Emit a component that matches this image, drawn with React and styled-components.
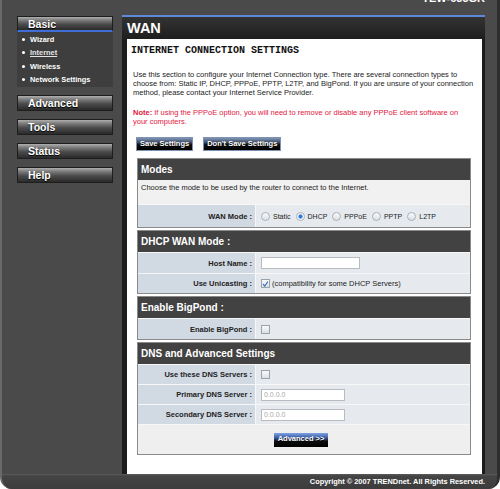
import React from 'react'
import styled, { createGlobalStyle } from 'styled-components'

const GlobalStyle = createGlobalStyle`
  html, body { margin: 0; padding: 0; background: #fff; }
  body { font-family: "Liberation Sans", Arial, sans-serif; overflow: hidden; }
  * { box-sizing: border-box; }
`

const Frame = styled.div`
  width: 500px;
  background: #4a4a4a;
  border-left: 2px solid #6a6a6a;
  border-right: 3px solid #2e2e2e;
  border-radius: 0 0 12px 12px;
  overflow: hidden;
`

const TopBar = styled.div`
  height: 15px;
  display: flex;
  justify-content: flex-end;
  padding-right: 12px;
  overflow: hidden;
`

const Model = styled.div`
  margin-top: -8px;
  color: #fff;
  font-weight: bold;
  font-size: 11px;
  line-height: 12px;
`

const Body = styled.div`
  display: flex;
  height: 459px;
`

const Sidebar = styled.div`
  width: 120px;
  padding: 1px 0 0 15px;
  display: flex;
  flex-direction: column;
  gap: 8px;
`

const MenuGroup = styled.div`
  display: flex;
  flex-direction: column;
`

const MenuButton = styled.div`
  width: 96px;
  height: 16px;
  border: 1px solid #1e1e1e;
  border-bottom: ${({ $active }) => ($active ? '2px solid #3f6fd6' : '1px solid #1e1e1e')};
  background: linear-gradient(to bottom, #b0b0b0 0%, #808080 22%, #4c4c4c 55%, #2a2a2a 100%);
  color: #fff;
  font-weight: bold;
  font-size: 10.5px;
  line-height: 14px;
  padding-left: 10px;
  text-shadow: 0 1px 1px #000;
`

const SubMenu = styled.div`
  width: 96px;
  height: 55px;
  background: #3e3e3e;
  padding-top: 1px;
`

const SubItem = styled.div`
  display: flex;
  align-items: center;
  height: 13.3px;
  padding-left: 5px;
  gap: 5px;
  color: ${({ $current }) => ($current ? '#e4e4e4' : '#fff')};
  font-weight: bold;
  font-size: 7.4px;
  text-decoration: ${({ $current }) => ($current ? 'underline' : 'none')};
`

const Bullet = styled.span`
  width: 3px;
  height: 3px;
  border-radius: 50%;
  background: #fff;
`

const Main = styled.div`
  width: 363px;
  display: flex;
  flex-direction: column;
  background: #1c1c1c;
`

const MainHeader = styled.div`
  height: 24px;
  border-top: 2px solid #5f88d8;
  background: linear-gradient(to bottom, #333 0%, #1e1e1e 100%);
  color: #fff;
  font-weight: bold;
  font-size: 14.5px;
  line-height: 22px;
  padding-left: 5px;
`

const ContentWrap = styled.div`
  flex: 1;
  display: flex;
  padding: 0 3px 0 5px;
`

const Content = styled.div`
  flex: 1;
  background: #fff;
  padding: 7px 4px 0 4px;
`

const Title = styled.div`
  font-family: "Liberation Mono", "Courier New", monospace;
  font-weight: bold;
  font-size: 10px;
  line-height: 10px;
  color: #111;
`

const Para = styled.p`
  margin: ${({ $top }) => $top}px 0 0 2px;
  font-size: 7.5px;
  line-height: 9.2px;
  color: ${({ $note }) => ($note ? '#e4163c' : '#222')};
  white-space: nowrap;
`

const ButtonRow = styled.div`
  display: flex;
  gap: 10px;
  margin: 11px 0 0 5px;
`

const Button = styled.div`
  height: 14px;
  padding: 0 3px;
  border: 1px solid #7d93b4;
  background: linear-gradient(to bottom, #7f95b6 0%, #44526a 35%, #111 55%, #000 100%);
  color: #fff;
  font-weight: bold;
  font-size: 7.5px;
  line-height: 12px;
  text-shadow: 0 1px 0 #000;
`

const Sections = styled.div`
  width: 334px;
  margin: 7px 0 0 6px;
  display: flex;
  flex-direction: column;
  gap: 2px;
`

const Section = styled.div`
  border: 1px solid #8a8a8a;
`

const SectionHead = styled.div`
  height: 21px;
  background: #424242;
  color: #fff;
  font-weight: bold;
  font-size: 10px;
  line-height: 21px;
  padding-left: 3px;
`

const DescRow = styled.div`
  height: 24px;
  background: #f1f1f1;
  font-size: 7.5px;
  padding: 3px 0 0 3px;
  color: #222;
`

const Row = styled.div`
  display: flex;
  height: ${({ $h }) => $h || 20}px;
  border-top: 1px solid #f7f7f7;
`

const Label = styled.div`
  width: 118px;
  background: #d1d9e3;
  border-right: 1px solid #f7f7f7;
  display: flex;
  align-items: center;
  justify-content: flex-end;
  padding-right: 3px;
  font-weight: bold;
  font-size: 7.5px;
  color: #222;
`

const Value = styled.div`
  flex: 1;
  background: #e6eaef;
  display: flex;
  align-items: center;
  padding-left: 5px;
  font-size: 7.5px;
  color: #222;
`

const Radio = styled.span`
  width: 9px;
  height: 9px;
  border-radius: 50%;
  border: 1px solid #a9b0b8;
  background: ${({ $on }) =>
    $on ? 'radial-gradient(circle, #2d7be0 0 1.8px, #f4f6f8 2.4px)' : 'linear-gradient(#f8f9fa, #dde1e5)'};
  margin-right: 3px;
`

const RadioText = styled.span`
  font-size: 7px;
  margin-right: 5px;
`

const Check = styled.span`
  width: 9px;
  height: 9px;
  border: 1px solid #9aa2aa;
  background: linear-gradient(#fafafa, #dcdfe3);
  display: flex;
  align-items: center;
  justify-content: center;
  margin-right: ${({ $gap }) => $gap || 0}px;
`

const TextBox = styled.div`
  width: ${({ $w }) => $w}px;
  height: ${({ $h }) => $h}px;
  background: #fff;
  border: 1px solid #b8bcc2;
  color: #a8a8a8;
  font-size: 7px;
  line-height: ${({ $h }) => $h - 2}px;
  padding-left: 2px;
`

const ActionRow = styled.div`
  height: 30px;
  border-top: 1px solid #f7f7f7;
  background: #efefef;
  display: flex;
  align-items: center;
  justify-content: center;
  padding-right: 6px;
`

const AdvButton = styled(Button)`
  border: none;
  padding: 0 4px;
  background: linear-gradient(to bottom, #7fa3e6 0%, #3a5a9e 35%, #0c0c0c 60%, #000 100%);
`

const Footer = styled.div`
  height: 15px;
  background: linear-gradient(to bottom, #5c5c5c 0, #444 2px, #3c3c3c 100%);
  color: #fff;
  font-weight: bold;
  font-size: 7.4px;
  line-height: 15px;
  text-align: right;
  padding-right: 12px;
`

const CheckMark = () => (
  <svg width="8" height="8" viewBox="0 0 8 8">
    <path d="M1.2 4.2 L3.2 6.4 L6.8 1.2" fill="none" stroke="#2f64c8" strokeWidth="1.2" />
  </svg>
)

const menu = ['Advanced', 'Tools', 'Status', 'Help']
const subItems = ['Wizard', 'Internet', 'Wireless', 'Network Settings']
const modes = ['Static', 'DHCP', 'PPPoE', 'PPTP', 'L2TP']

export default function App() {
  return (
    <>
      <GlobalStyle />
      <Frame>
        <TopBar>
          <Model>TEW-633GR</Model>
        </TopBar>
        <Body>
          <Sidebar>
            <MenuGroup>
              <MenuButton $active>Basic</MenuButton>
              <SubMenu>
                {subItems.map((s) => (
                  <SubItem key={s} $current={s === 'Internet'}>
                    <Bullet />
                    {s}
                  </SubItem>
                ))}
              </SubMenu>
            </MenuGroup>
            {menu.map((m) => (
              <MenuButton key={m}>{m}</MenuButton>
            ))}
          </Sidebar>
          <Main>
            <MainHeader>WAN</MainHeader>
            <ContentWrap>
              <Content>
                <Title>INTERNET CONNECTION SETTINGS</Title>
                <Para $top={14}>
                  Use this section to configure your Internet Connection type. There are several connection types to
                  <br />
                  choose from: Static IP, DHCP, PPPoE, PPTP, L2TP, and BigPond. If you are unsure of your connection
                  <br />
                  method, please contact your Internet Service Provider.
                </Para>
                <Para $top={10} $note>
                  <b>Note:</b> If using the PPPoE option, you will need to remove or disable any PPPoE client software on
                  <br />
                  your computers.
                </Para>
                <ButtonRow>
                  <Button>Save Settings</Button>
                  <Button>Don't Save Settings</Button>
                </ButtonRow>
                <Sections>
                  <Section>
                    <SectionHead>Modes</SectionHead>
                    <DescRow>Choose the mode to be used by the router to connect to the Internet.</DescRow>
                    <Row $h={23}>
                      <Label>WAN Mode :</Label>
                      <Value>
                        {modes.map((m) => (
                          <React.Fragment key={m}>
                            <Radio $on={m === 'DHCP'} />
                            <RadioText>{m}</RadioText>
                          </React.Fragment>
                        ))}
                      </Value>
                    </Row>
                  </Section>
                  <Section>
                    <SectionHead>DHCP WAN Mode :</SectionHead>
                    <Row $h={21}>
                      <Label>Host Name :</Label>
                      <Value>
                        <TextBox $w={99} $h={12} />
                      </Value>
                    </Row>
                    <Row $h={20}>
                      <Label>Use Unicasting :</Label>
                      <Value>
                        <Check $gap={2}>
                          <CheckMark />
                        </Check>
                        (compatibility for some DHCP Servers)
                      </Value>
                    </Row>
                  </Section>
                  <Section>
                    <SectionHead>Enable BigPond :</SectionHead>
                    <Row $h={21}>
                      <Label>Enable BigPond :</Label>
                      <Value>
                        <Check />
                      </Value>
                    </Row>
                  </Section>
                  <Section>
                    <SectionHead>DNS and Advanced Settings</SectionHead>
                    <Row $h={20}>
                      <Label>Use these DNS Servers :</Label>
                      <Value>
                        <Check />
                      </Value>
                    </Row>
                    <Row $h={20}>
                      <Label>Primary DNS Server :</Label>
                      <Value>
                        <TextBox $w={84} $h={12}>0.0.0.0</TextBox>
                      </Value>
                    </Row>
                    <Row $h={20}>
                      <Label>Secondary DNS Server :</Label>
                      <Value>
                        <TextBox $w={84} $h={12}>0.0.0.0</TextBox>
                      </Value>
                    </Row>
                    <ActionRow>
                      <AdvButton>Advanced &gt;&gt;</AdvButton>
                    </ActionRow>
                  </Section>
                </Sections>
              </Content>
            </ContentWrap>
          </Main>
        </Body>
        <Footer>Copyright © 2007 TRENDnet. All Rights Reserved.</Footer>
      </Frame>
    </>
  )
}
